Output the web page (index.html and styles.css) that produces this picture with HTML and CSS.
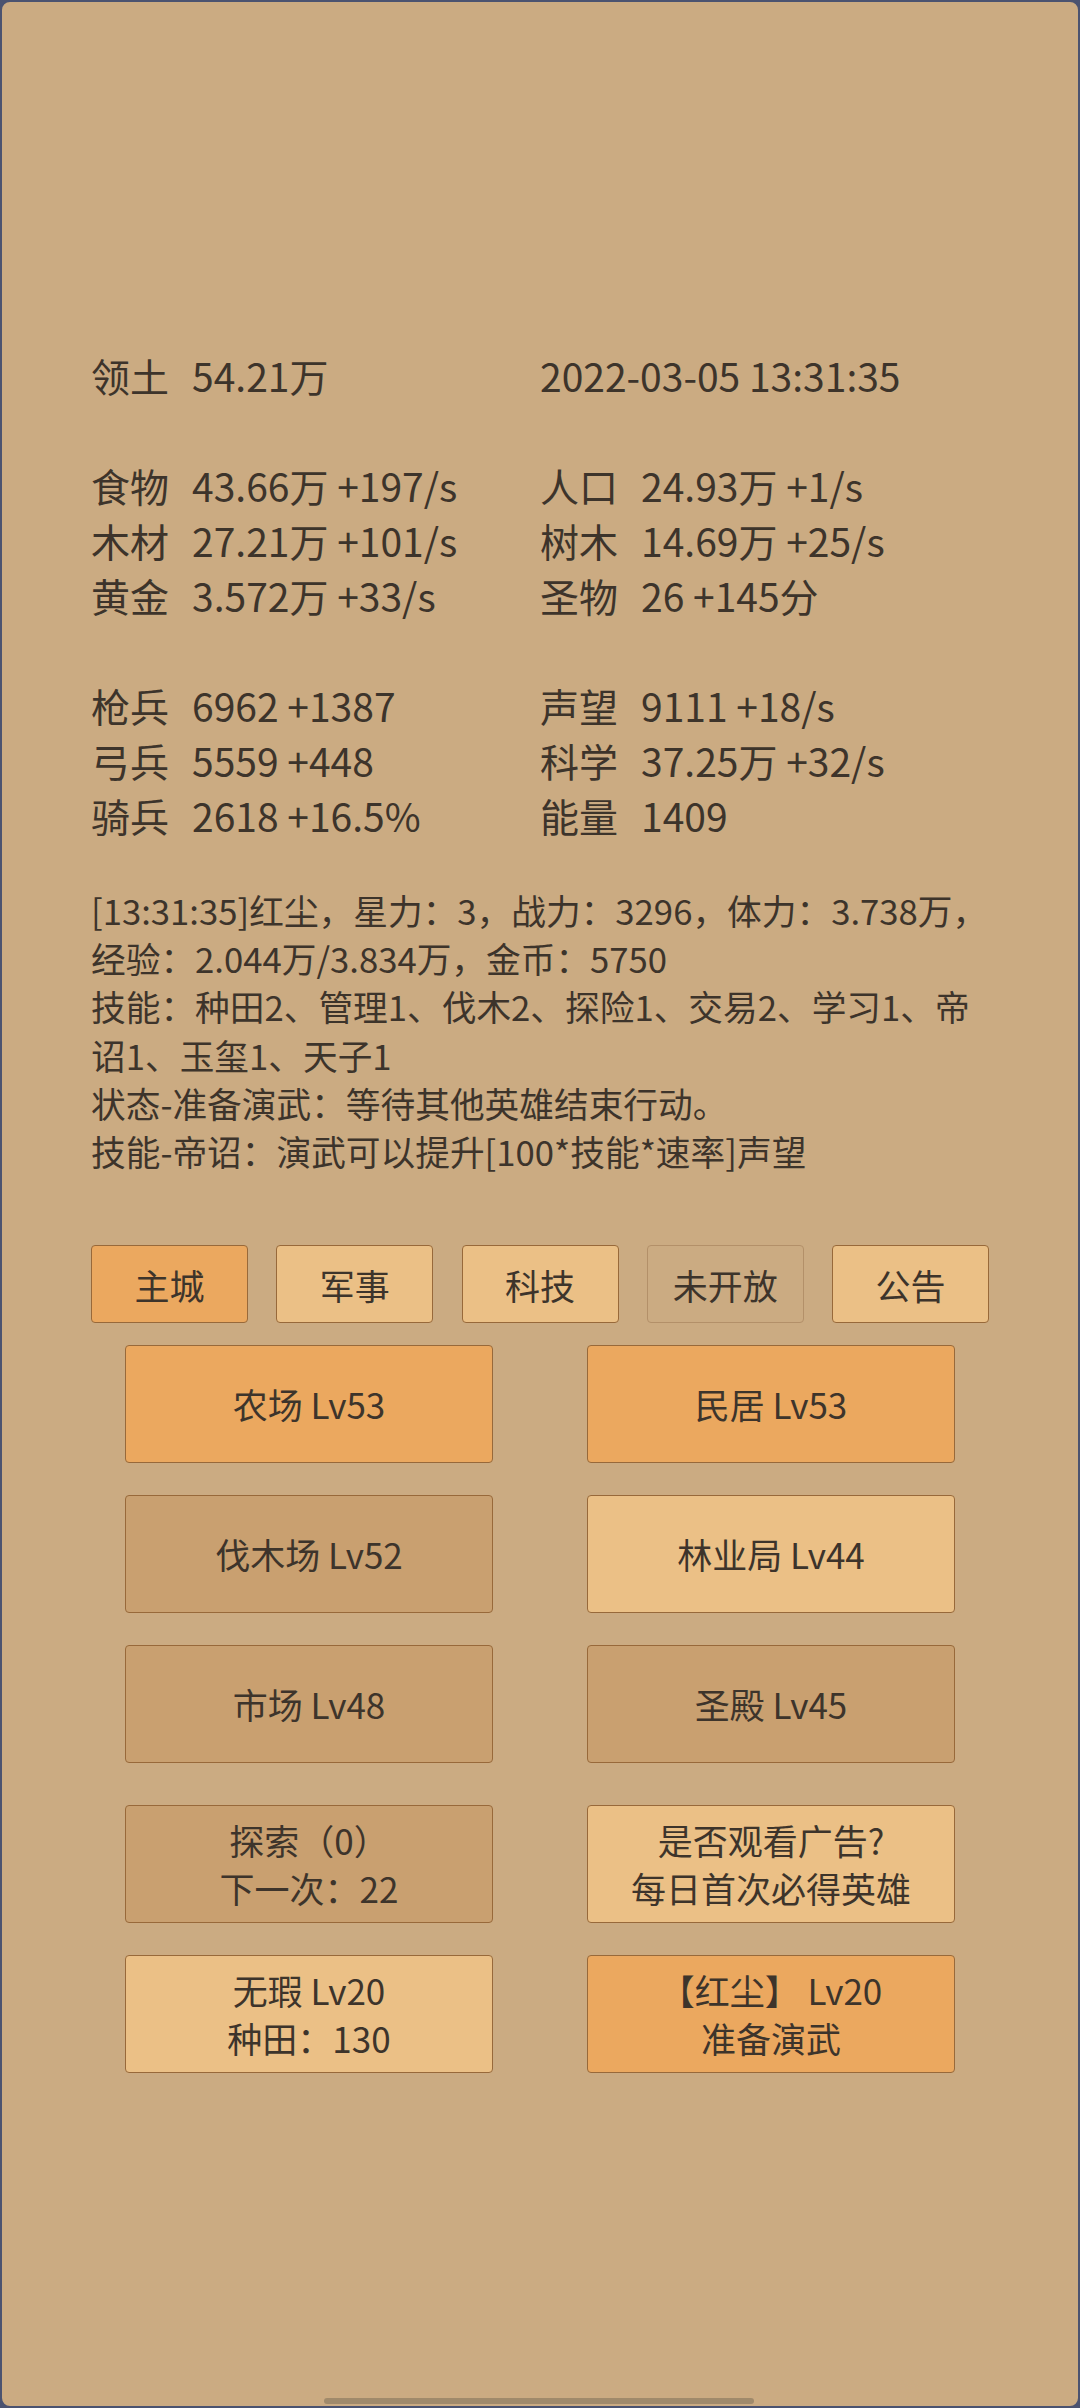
FILE: index.html
```html
<!DOCTYPE html>
<html lang="zh-CN">
<head>
    <meta charset="UTF-8">
    <meta name="viewport" content="width=device-width, initial-scale=1.0">
    <title>主城</title>
    <link rel="stylesheet" href="styles.css">
</head>
<body>

<div class="screen">

    <!-- 资源 -->
    <div class="stats">
        <div class="stat"><span class="k">领土</span><span>54.21万</span></div>
        <div class="stat"><span>2022-03-05 13:31:35</span></div>
    </div>

    <div class="stats group">
        <div class="stat"><span class="k">食物</span><span>43.66万 +197/s</span></div>
        <div class="stat"><span class="k">人口</span><span>24.93万 +1/s</span></div>
        <div class="stat"><span class="k">木材</span><span>27.21万 +101/s</span></div>
        <div class="stat"><span class="k">树木</span><span>14.69万 +25/s</span></div>
        <div class="stat"><span class="k">黄金</span><span>3.572万 +33/s</span></div>
        <div class="stat"><span class="k">圣物</span><span>26 +145分</span></div>
    </div>

    <div class="stats group">
        <div class="stat"><span class="k">枪兵</span><span>6962 +1387</span></div>
        <div class="stat"><span class="k">声望</span><span>9111 +18/s</span></div>
        <div class="stat"><span class="k">弓兵</span><span>5559 +448</span></div>
        <div class="stat"><span class="k">科学</span><span>37.25万 +32/s</span></div>
        <div class="stat"><span class="k">骑兵</span><span>2618 +16.5%</span></div>
        <div class="stat"><span class="k">能量</span><span>1409</span></div>
    </div>

    <!-- 英雄日志 -->
    <div class="log">
        <div>[13:31:35]红尘，星力：3，战力：3296，体力：3.738万，经验：2.044万/3.834万，金币：5750</div>
        <div>技能：种田2、管理1、伐木2、探险1、交易2、学习1、帝诏1、玉玺1、天子1</div>
        <div>状态-准备演武：等待其他英雄结束行动。</div>
        <div>技能-帝诏：演武可以提升[100*技能*速率]声望</div>
    </div>

    <!-- 标签 -->
    <div class="tabs">
        <div class="tab active">主城</div>
        <div class="tab">军事</div>
        <div class="tab">科技</div>
        <div class="tab closed">未开放</div>
        <div class="tab">公告</div>
    </div>

    <!-- 建筑 -->
    <div class="grid">
        <div class="btn orange">农场 Lv53</div>
        <div class="btn orange">民居 Lv53</div>
        <div class="btn dark">伐木场 Lv52</div>
        <div class="btn light">林业局 Lv44</div>
        <div class="btn dark">市场 Lv48</div>
        <div class="btn dark">圣殿 Lv45</div>
    </div>

    <!-- 英雄 -->
    <div class="grid heroes">
        <div class="btn dark">探索（0）<br>下一次：22</div>
        <div class="btn light">是否观看广告?<br>每日首次必得英雄</div>
        <div class="btn light">无瑕 Lv20<br>种田：130</div>
        <div class="btn orange">【红尘】 Lv20<br>准备演武</div>
    </div>

    <div class="home-bar"></div>
</div>

</body>
</html>
```

FILE: styles.css
```css
body {
    margin: 0;
    background-color: #4b5370;
    font-family: "Noto Sans CJK SC", "Noto Sans", sans-serif;
    color: #3d342b;
}

.screen {
    position: relative;
    box-sizing: border-box;
    width: 1080px;
    height: 2408px;
    padding: 346px 89px 0 89px;
    border: 2px solid #4b5370;
    border-radius: 10px;
    background-color: #cbab82;
}

/* 资源 */
.stats {
    display: grid;
    grid-template-columns: 449px 449px;
    grid-auto-rows: 55px;
    font-size: 39px;
    line-height: 55px;
}
.stats.group {
    margin-top: 55px;
}
.stat {
    white-space: nowrap;
}
.k {
    display: inline-block;
    width: 101px;
}

/* 日志 */
.log {
    margin-top: 43px;
    font-size: 34.7px;
    line-height: 48.2px;
}

/* 标签 */
.tabs {
    display: flex;
    justify-content: space-between;
    margin-top: 70px;
}
.tab {
    box-sizing: border-box;
    width: 157px;
    height: 78px;
    display: flex;
    align-items: center;
    justify-content: center;
    font-size: 35px;
    background-color: #ebc086;
    border: 1.5px solid #98693a;
    border-radius: 4px;
}
.tab.active {
    background-color: #eba85f;
}
.tab.closed {
    background-color: #cbab82;
    border-color: #b39069;
}

/* 按钮 */
.grid {
    display: grid;
    grid-template-columns: 368px 368px;
    grid-auto-rows: 118px;
    column-gap: 94px;
    row-gap: 32px;
    justify-content: center;
    margin-top: 22px;
}
.grid.heroes {
    margin-top: 42px;
}
.btn {
    box-sizing: border-box;
    display: flex;
    align-items: center;
    justify-content: center;
    text-align: center;
    font-size: 35px;
    line-height: 48px;
    border: 1.5px solid #98693a;
    border-radius: 4px;
}
.btn.orange {
    background-color: #eba85f;
}
.btn.light {
    background-color: #ebc086;
}
.btn.dark {
    background-color: #c9a070;
}

.home-bar {
    position: absolute;
    left: 322px;
    bottom: 2px;
    width: 430px;
    height: 6px;
    border-radius: 3px;
    background-color: #a08a6b;
}
```
